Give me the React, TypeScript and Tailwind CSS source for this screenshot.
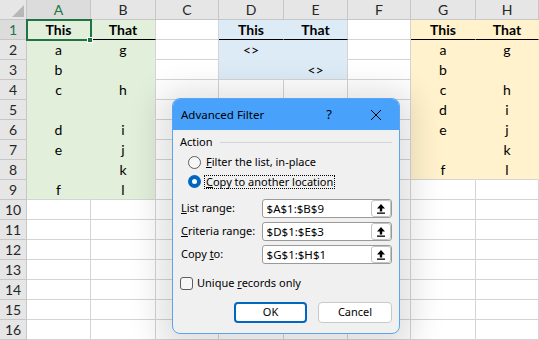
import React from 'react';

const COL_LETTERS = ['A', 'B', 'C', 'D', 'E', 'F', 'G', 'H'];
const ROWS = 16;

const values: Record<string, string> = {
  A1: 'This', B1: 'That', D1: 'This', E1: 'That', G1: 'This', H1: 'That',
  A2: 'a', B2: 'g', A3: 'b', A4: 'c', B4: 'h', A6: 'd', B6: 'i', A7: 'e', B7: 'j', B8: 'k', A9: 'f', B9: 'l',
  D2: '<>', E3: '<>',
  G2: 'a', H2: 'g', G3: 'b', G4: 'c', H4: 'h', G5: 'd', H5: 'i', G6: 'e', H6: 'j', H7: 'k', G8: 'f', H8: 'l',
};

function fillOf(r: number, c: number): string | null {
  if (c <= 1 && r >= 1 && r <= 9) return 'green';
  if ((c === 3 || c === 4) && r >= 1 && r <= 3) return 'blue';
  if (c >= 6 && r >= 1 && r <= 8) return 'yellow';
  return null;
}

const fillBg: Record<string, string> = {
  green: 'bg-[#e2efda]',
  blue: 'bg-[#ddebf7]',
  yellow: 'bg-[#fff2cc]',
};
const fillRight: Record<string, string> = {
  green: 'border-r-[#e2efda]',
  blue: 'border-r-[#ddebf7]',
  yellow: 'border-r-[#fff2cc]',
};
const fillBottom: Record<string, string> = {
  green: 'border-b-[#e2efda]',
  blue: 'border-b-[#ddebf7]',
  yellow: 'border-b-[#fff2cc]',
};

function Cell({ r, c }: { r: number; c: number }) {
  const f = fillOf(r, c);
  const right = f && fillOf(r, c + 1) === f ? fillRight[f] : 'border-r-[#d4d4d4]';
  let bottom = f && fillOf(r + 1, c) === f ? fillBottom[f] : 'border-b-[#d4d4d4]';
  if (r === 1 && f) bottom = 'border-b-black';
  const key = COL_LETTERS[c] + r;
  const v = values[key];
  return (
    <div
      className={`relative h-5 border-r border-b flex items-center justify-center text-[14px] text-black ${right} ${bottom} ${f ? fillBg[f] : 'bg-white'} ${r === 1 ? 'font-bold' : ''}`}
    >
      {v}
      {key === 'A1' && (
        <>
          <div className="absolute left-[-1px] top-[-1px] w-[66px] h-[22px] border-2 border-[#217346] z-10" />
          <div className="absolute left-[60px] top-[17px] w-[6px] h-[6px] bg-[#217346] border border-white z-20" />
        </>
      )}
    </div>
  );
}

function UpButton() {
  return (
    <div className="w-5 h-[17px] flex items-center justify-center bg-white border border-[#c4c4c4] rounded-[3px]">
      <svg width="10" height="11" viewBox="0 0 10 11">
        <path d="M5 1 L9 5.5 L6.2 5.5 L6.2 8.5 L3.8 8.5 L3.8 5.5 L1 5.5 Z" fill="#000" />
        <rect x="1" y="9.5" width="8" height="1.3" fill="#000" />
      </svg>
    </div>
  );
}

function RangeRow({ label, value }: { label: React.ReactNode; value: string }) {
  return (
    <div className="flex items-center h-[19px] pl-[1px]">
      <div className="w-[81px] whitespace-nowrap">{label}</div>
      <div className="w-[131px] h-[19px] flex items-center justify-between bg-white border border-[#9a9a9a] rounded-[3px] pl-[4px]">
        <span className="text-[11.5px]">{value}</span>
        <UpButton />
      </div>
    </div>
  );
}

function Dialog() {
  return (
    <div className="absolute left-[172px] top-[98px] w-[228px] h-[236px] rounded-lg border border-[#5aa5ef] bg-[#f0f0f0] shadow-[0_6px_32px_14px_rgba(0,0,0,0.12)] font-['Noto_Sans',sans-serif] text-[11px] text-black overflow-hidden z-30">
      <div className="h-[31px] bg-[#48a2fb] flex items-center pl-[8px]">
        <span className="text-[11.5px]">Advanced Filter</span>
        <span className="ml-auto text-[13px] mr-[38px]">?</span>
        <svg width="12" height="12" viewBox="0 0 12 12" className="mr-[17px]">
          <path d="M1 1 L11 11 M11 1 L1 11" stroke="#000" strokeWidth="1" />
        </svg>
      </div>
      <div className="px-[7px] pt-[3px]">
        <div className="flex items-center h-[18px]">
          <span>Action</span>
          <div className="flex-1 ml-[7px] h-px bg-[#d4d4d4]" />
        </div>
        <div className="flex items-center h-[19px] pl-[8px] mt-[2px]">
          <div className="w-[13px] h-[13px] rounded-full border border-[#5d5d5d] bg-[#f7f7f7]" />
          <span className="ml-[5px]"><u>F</u>ilter the list, in-place</span>
        </div>
        <div className="flex items-center h-[19px] pl-[8px]">
          <div className="w-[13px] h-[13px] rounded-full bg-[#0067c0] flex items-center justify-center">
            <div className="w-[5px] h-[5px] rounded-full bg-white" />
          </div>
          <span className="ml-[3px] px-[1px] border border-dotted border-black leading-[12px]"><u>C</u>opy to another location</span>
        </div>
        <div className="mt-[8px] flex flex-col gap-[4px]">
          <RangeRow label={<><u>L</u>ist range:</>} value="$A$1:$B$9" />
          <RangeRow label={<><u>C</u>riteria range:</>} value="$D$1:$E$3" />
          <RangeRow label={<>Copy <u>t</u>o:</>} value="$G$1:$H$1" />
        </div>
        <div className="flex items-center h-[19px] mt-[10px]">
          <div className="w-[13px] h-[13px] rounded-[3px] border border-[#5d5d5d] bg-[#f7f7f7]" />
          <span className="ml-[4px]">Unique <u>r</u>ecords only</span>
        </div>
        <div className="flex justify-end gap-[11px] mt-[9px]">
          <button className="w-[73px] h-[21px] bg-white border-2 border-[#0067c0] rounded-[4px] flex items-center justify-center">OK</button>
          <button className="w-[74px] h-[21px] bg-white border border-[#c9c9c9] rounded-[4px] flex items-center justify-center">Cancel</button>
        </div>
      </div>
    </div>
  );
}

export default function App() {
  return (
    <div className="relative w-[539px] h-[340px] overflow-hidden bg-white font-['Lato',sans-serif]">
      <div className="grid grid-cols-[27px_64px_65px_63px_65px_64px_63px_65px_63px]">
        <div className="h-5 bg-[#e6e6e6] border-r border-b border-[#c6c6c6] flex items-end justify-end p-[2px]">
          <svg width="12" height="12" viewBox="0 0 12 12">
            <path d="M12 0 L12 12 L0 12 Z" fill="#b7b7b7" />
          </svg>
        </div>
        {COL_LETTERS.map((l, i) => (
          <div
            key={l}
            className={`h-5 border-r border-b border-[#c6c6c6] flex items-center justify-center text-[14px] ${i === 0 ? 'bg-[#dcdcdc] text-[#217346]' : 'bg-[#e6e6e6] text-[#262626]'}`}
          >
            {l}
          </div>
        ))}
        {Array.from({ length: ROWS }, (_, ri) => {
          const r = ri + 1;
          return (
            <React.Fragment key={r}>
              <div
                className={`h-5 border-r border-b border-[#c6c6c6] flex items-center justify-center text-[14px] ${r === 1 ? 'bg-[#dcdcdc] text-[#217346]' : 'bg-[#e6e6e6] text-[#262626]'}`}
              >
                {r}
              </div>
              {COL_LETTERS.map((_, c) => (
                <Cell key={c} r={r} c={c} />
              ))}
            </React.Fragment>
          );
        })}
      </div>
      <Dialog />
    </div>
  );
}
